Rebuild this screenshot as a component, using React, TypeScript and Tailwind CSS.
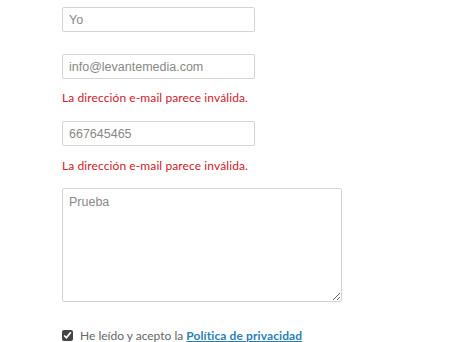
export default function App() {
  return (
    <div className="w-[450px] h-[342px] bg-white overflow-hidden pl-[62px] pt-[7px]">
      <input
        defaultValue="Yo"
        className="block w-[193px] h-[25px] border border-[#d4d4d4] rounded-[2px] px-[6px] text-[12.5px] text-[#888] font-['Liberation_Sans',Arial,sans-serif] outline-none"
      />
      <input
        defaultValue="info@levantemedia.com"
        className="block mt-[22px] w-[193px] h-[25px] border border-[#d4d4d4] rounded-[2px] px-[6px] text-[12.5px] text-[#888] font-['Liberation_Sans',Arial,sans-serif] outline-none"
      />
      <p className="mt-[11px] h-[28px] text-[12px] text-[#d0202a] font-['Lato',sans-serif] leading-[15px] tracking-[0.1px]">
        La dirección e-mail parece inválida.
      </p>
      <input
        defaultValue="667645465"
        className="block mt-[3px] w-[193px] h-[25px] border border-[#d4d4d4] rounded-[2px] px-[6px] text-[12.5px] text-[#888] font-['Liberation_Sans',Arial,sans-serif] outline-none"
      />
      <p className="mt-[12px] h-[30px] text-[12px] text-[#d0202a] font-['Lato',sans-serif] leading-[15px] tracking-[0.1px]">
        La dirección e-mail parece inválida.
      </p>
      <textarea
        defaultValue="Prueba"
        className="block w-[280px] h-[114px] border border-[#d4d4d4] rounded-[2px] px-[6px] py-[4px] text-[12.5px] text-[#888] font-['Liberation_Sans',Arial,sans-serif] outline-none resize"
      />
      <label className="mt-[26px] flex items-center gap-[7px] text-[12px] text-[#666] font-['Lato',sans-serif] leading-[15px]">
        <input type="checkbox" defaultChecked className="w-[11px] h-[11px] m-0 accent-[#444]" />
        <span>
          He leído y acepto la{" "}
          <a href="#" className="font-bold text-[#2a7fb8] underline tracking-[0.1px]">
            Política de privacidad
          </a>
        </span>
      </label>
    </div>
  );
}
